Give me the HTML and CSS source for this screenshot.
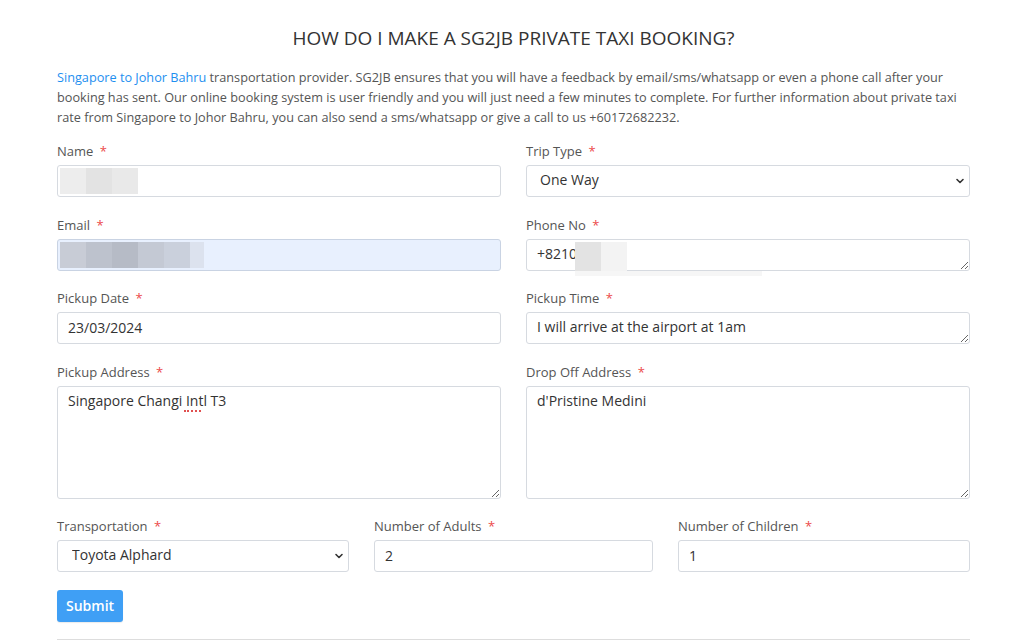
FILE: index.html
```html
<!DOCTYPE html>
<html lang="en">
<head>
    <meta charset="UTF-8">
    <meta name="viewport" content="width=device-width, initial-scale=1.0">
    <title>SG2JB Private Taxi Booking</title>
    <link rel="stylesheet" href="styles.css">
</head>
<body>
    <div class="container">
        <h1>How do I make a SG2JB private taxi booking?</h1>

        <p class="intro"><a href="#">Singapore to Johor Bahru</a> transportation provider. SG2JB ensures that you will have a feedback by email/sms/whatsapp or even a phone call after your booking has sent. Our online booking system is user friendly and you will just need a few minutes to complete. For further information about private taxi rate from Singapore to Johor Bahru, you can also send a sms/whatsapp or give a call to us +60172682232.</p>

        <form class="booking-form" onsubmit="return false">
            <div class="form-row">
                <div class="field">
                    <label>Name <span class="req">*</span></label>
                    <div class="input-wrap">
                        <input type="text" class="form-control">
                        <div class="redact name-redact">
                            <span style="background:#ededed"></span><span style="background:#e3e3e3"></span><span style="background:#e9e9e9"></span>
                        </div>
                    </div>
                </div>
                <div class="field">
                    <label>Trip Type <span class="req">*</span></label>
                    <div class="select-wrap">
                        <select class="form-control">
                            <option>One Way</option>
                            <option>Return</option>
                        </select>
                        <svg class="chevron" width="10" height="10" viewBox="0 0 10 10"><path d="M2 3.5 L5 6.5 L8 3.5" fill="none" stroke="#333" stroke-width="1.6" stroke-linecap="round" stroke-linejoin="round"/></svg>
                    </div>
                </div>
            </div>

            <div class="form-row">
                <div class="field">
                    <label>Email <span class="req">*</span></label>
                    <div class="input-wrap">
                        <input type="email" class="form-control autofill">
                        <div class="redact email-redact">
                            <span style="background:#c8ccd6"></span><span style="background:#bdc2cd"></span><span style="background:#b6bbc6"></span><span style="background:#c4c9d4"></span><span style="background:#cad0dc"></span><span class="thin" style="background:#dce2ee"></span>
                        </div>
                    </div>
                </div>
                <div class="field">
                    <label>Phone No <span class="req">*</span></label>
                    <div class="input-wrap">
                        <textarea class="form-control single" rows="1">+8210</textarea>
                        <div class="redact phone-redact">
                            <span style="background:#e3e3e3"></span><span style="background:#f3f3f3"></span>
                        </div>
                        <div class="phone-strip"></div>
                    </div>
                </div>
            </div>

            <div class="form-row">
                <div class="field">
                    <label>Pickup Date <span class="req">*</span></label>
                    <input type="text" class="form-control" value="23/03/2024">
                </div>
                <div class="field">
                    <label>Pickup Time <span class="req">*</span></label>
                    <textarea class="form-control single" rows="1">I will arrive at the airport at 1am</textarea>
                </div>
            </div>

            <div class="form-row">
                <div class="field">
                    <label>Pickup Address <span class="req">*</span></label>
                    <div class="input-wrap">
                        <textarea class="form-control tall" spellcheck="false">Singapore Changi Intl T3</textarea>
                        <span class="spell-mark"></span>
                    </div>
                </div>
                <div class="field">
                    <label>Drop Off Address <span class="req">*</span></label>
                    <textarea class="form-control tall" spellcheck="false">d'Pristine Medini</textarea>
                </div>
            </div>

            <div class="form-row three">
                <div class="field">
                    <label>Transportation <span class="req">*</span></label>
                    <div class="select-wrap">
                        <select class="form-control transport">
                            <option>Toyota Alphard</option>
                            <option>Toyota Vellfire</option>
                        </select>
                        <svg class="chevron" width="10" height="10" viewBox="0 0 10 10"><path d="M2 3.5 L5 6.5 L8 3.5" fill="none" stroke="#333" stroke-width="1.6" stroke-linecap="round" stroke-linejoin="round"/></svg>
                    </div>
                </div>
                <div class="field">
                    <label>Number of Adults <span class="req">*</span></label>
                    <input type="text" class="form-control" value="2">
                </div>
                <div class="field">
                    <label>Number of Children <span class="req">*</span></label>
                    <input type="text" class="form-control" value="1">
                </div>
            </div>

            <button type="submit" class="btn-submit">Submit</button>
        </form>

        <hr class="divider">
    </div>
</body>
</html>
```

FILE: styles.css
```css
body {
    margin: 0;
    font-family: 'Open Sans', 'Liberation Sans', sans-serif;
    color: #555;
    background-color: #ffffff;
}

.container {
    width: 913px;
    margin-left: 57px;
}

h1 {
    margin: 26px 0 17px;
    font-size: 19px;
    line-height: 24px;
    font-weight: 400;
    color: #333;
    text-align: center;
    text-transform: uppercase;
}

.intro {
    margin: 0 0 14px;
    font-size: 12.7px;
    line-height: 20px;
}

.intro a {
    color: #1e8ff0;
    text-decoration: none;
}

.form-row {
    display: grid;
    grid-template-columns: 1fr 1fr;
    gap: 25px;
    margin-bottom: 17.5px;
}

.form-row.three {
    grid-template-columns: 292px 279px 1fr;
}

.field {
    display: flex;
    flex-direction: column;
}

label {
    font-size: 13px;
    line-height: 20px;
    margin-bottom: 4px;
    color: #555;
}

.req {
    color: #ec4a4a;
    margin-left: 3px;
}

.form-control {
    display: block;
    box-sizing: border-box;
    width: 100%;
    height: 32px;
    padding: 0 10px 2px;
    border: 1px solid #d6dae0;
    border-radius: 3px;
    background-color: #fff;
    font-family: 'Open Sans', 'Liberation Sans', sans-serif;
    font-size: 14px;
    color: #333;
    outline: none;
}

textarea.form-control {
    padding: 4px 10px;
    line-height: 20px;
    resize: vertical;
}

textarea.single {
    height: 32px;
}

textarea.tall {
    height: 113px;
}

.form-control.autofill {
    background-color: #e8f0fe;
    border-color: #c9d3e3;
}

select.form-control {
    appearance: none;
    -webkit-appearance: none;
    padding-left: 13px;
    padding-bottom: 3px;
    cursor: pointer;
}

select.transport {
    padding-left: 14px;
}

.select-wrap,
.input-wrap {
    position: relative;
}

.chevron {
    position: absolute;
    right: 5px;
    top: 11px;
    pointer-events: none;
}

/* spellcheck squiggle under "Intl" */
.spell-mark {
    position: absolute;
    left: 127px;
    top: 24px;
    width: 17px;
    border-bottom: 2px dotted #e05050;
}

/* blurred-out personal details */
.redact {
    position: absolute;
    top: 3px;
    left: 3px;
    display: flex;
    height: 26px;
}

.redact span {
    width: 26px;
    height: 100%;
}

.redact span.thin {
    width: 14px;
}

.phone-redact {
    left: 49px;
    height: 29px;
}

.phone-strip {
    position: absolute;
    left: 49px;
    top: 32px;
    width: 187px;
    height: 5px;
    background: #f6f6f6;
}

.btn-submit {
    display: block;
    height: 32px;
    padding: 0 9px;
    border: none;
    border-radius: 3px;
    background-color: #3f9ff5;
    color: #fff;
    font-family: 'Open Sans', 'Liberation Sans', sans-serif;
    font-size: 14px;
    font-weight: 600;
    cursor: pointer;
    box-shadow: 0 1px 1px rgba(0, 0, 0, 0.08);
}

.divider {
    margin: 17px 0 0;
    border: none;
    border-top: 1px solid #ddd;
}
```
